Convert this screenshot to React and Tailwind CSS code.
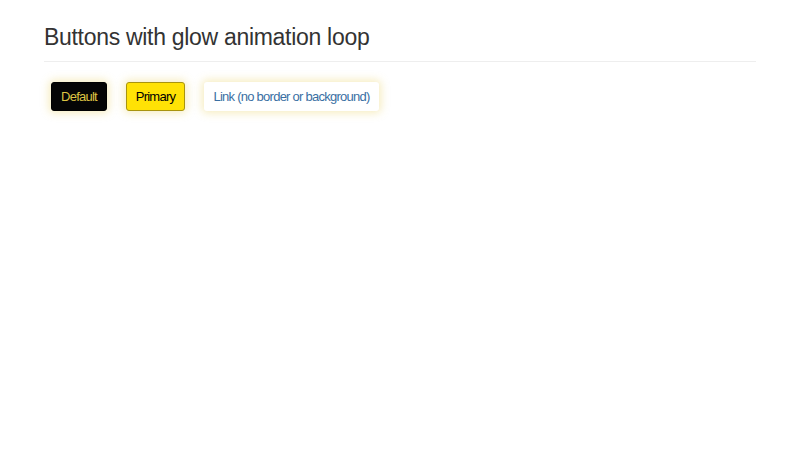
export default function App() {
  const glow = 'shadow-[0_0_9px_2px_rgba(230,200,70,0.35)]';
  const btn = 'h-[29px] flex items-center justify-center rounded-[3px] text-[13px] tracking-[-0.75px]';
  return (
    <div className="min-h-screen bg-white px-[44px] pt-[21px] font-['Liberation_Sans',Arial,sans-serif]">
      <h1 className="pb-[8px] border-b border-[#eeeeee] text-[23px] leading-[32px] tracking-[-0.3px] text-[#333333]">
        Buttons with glow animation loop
      </h1>
      <div className="flex items-center pt-[20px] pl-[7px] gap-[19px]">
        <button className={`${btn} w-[56px] border border-black bg-[#050505] text-[#dcc443] ${glow}`}>
          Default
        </button>
        <button className={`${btn} w-[59px] border border-[#a8940e] bg-[#ffe205] text-black ${glow}`}>
          Primary
        </button>
        <button className={`${btn} w-[175px] bg-white text-[#3a6fa3] ${glow}`}>
          Link (no border or background)
        </button>
      </div>
    </div>
  );
}
